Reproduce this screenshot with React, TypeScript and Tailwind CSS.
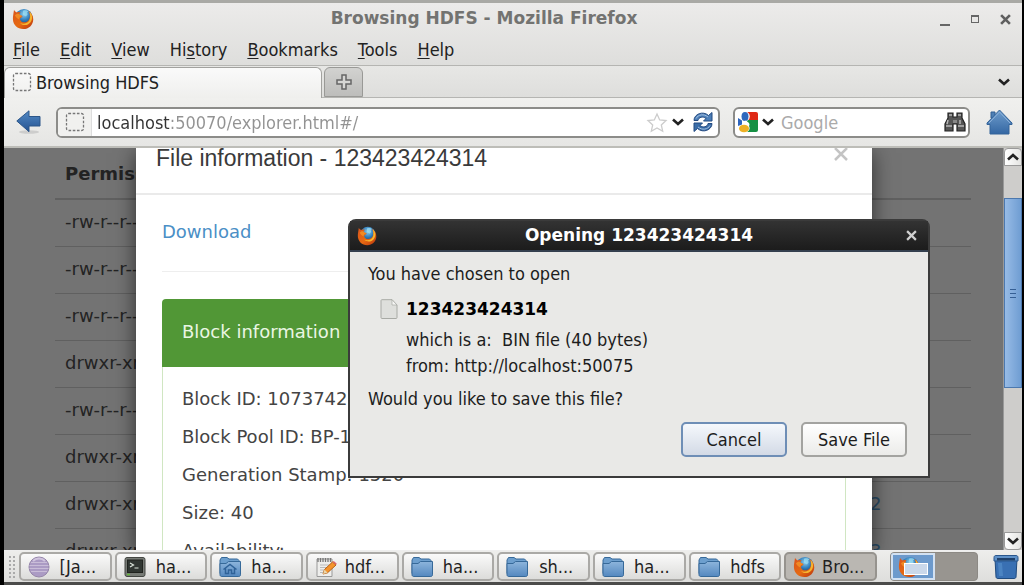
import React from "react";

const MENUS: [string, string, string][] = [
  ["", "F", "ile"],
  ["", "E", "dit"],
  ["", "V", "iew"],
  ["Hi", "s", "tory"],
  ["", "B", "ookmarks"],
  ["", "T", "ools"],
  ["", "H", "elp"],
];

const FILES = [
  { permission: "-rw-r--r--", name: "" },
  { permission: "-rw-r--r--", name: "" },
  { permission: "-rw-r--r--", name: "" },
  { permission: "drwxr-xr-x", name: "" },
  { permission: "-rw-r--r--", name: "" },
  { permission: "drwxr-xr-x", name: "" },
  { permission: "drwxr-xr-x", name: "2" },
  { permission: "drwxr-xr-x", name: "3" },
];

const BLOCK_INFO = ["Block ID: 1073742", "Block Pool ID: BP-1", "Generation Stamp: 1520", "Size: 40", "Availability:"];

function FirefoxIcon({ className }: { className: string }) {
  return (
    <svg className={className} viewBox="0 0 24 24" aria-hidden="true">
      <defs>
        <radialGradient id="ff-globe" cx="0.5" cy="0.3" r="0.7">
          <stop offset="0" stopColor="#8fd0ee" />
          <stop offset="0.5" stopColor="#2f7cba" />
          <stop offset="1" stopColor="#102f63" />
        </radialGradient>
        <linearGradient id="ff-fox" x1="0" y1="0" x2="1" y2="1">
          <stop offset="0" stopColor="#d9541c" />
          <stop offset="0.55" stopColor="#e66a12" />
          <stop offset="1" stopColor="#b8330e" />
        </linearGradient>
      </defs>
      <circle cx="13" cy="10.5" r="9.500" fill="url(#ff-globe)" />
      <path d="M12 3c2-1 5-.6 6 1-1.500.2-2 1-1.200 2 .8 1.200-.8 2-1.600 3.200-1-1.200-2.700-.7-3.200-2.200z" fill="#9adcf2" opacity=".75" />
      <path
        d="M2.200 2c.7 1.700 1.800 2.500 3.200 2.800C7 4 8.300 4.100 9.500 4.800 8.300 5.500 7.800 6.500 8 7.600l3.600 1.100c-.3 1.500-2.200 1.700-3 2.900.2 3.600 4.500 5.200 8 3.100 2.500-1.600 3.400-4.300 2.700-8.200-.4-1.600-1-2.700-1.800-3.500 3.600 2 5.800 5.400 5.700 9.500C23 18.600 18.300 23 12.300 23 6 23 1.200 18.500 1 12.300.9 9 1.600 6.500 2.200 2z"
        fill="url(#ff-fox)"
      />
      <path d="M19 3.800c3.500 3.100 4 8.500 1 12-2.700 3.400-8 3.800-11.200.8 4.300 1.200 8.300.1 10-3 1.400-2.600 1.300-6.500.2-9.800z" fill="#f6b52f" />
      <path d="M3.200 8.200c1-1.500 2.600-2.200 4.400-1.700L11 9c-1.800.3-3.400 1.700-3.100 3.600-2-.8-3.500-2.300-4.700-4.400z" fill="#f08a24" />
    </svg>
  );
}

function PageIcon() {
  return (
    <svg className="size-5 shrink-0" viewBox="0 0 20 20" aria-hidden="true">
      <rect x="1.500" y="1.500" width="17" height="17" rx="2" fill="none" stroke="#777" strokeWidth="1.300" strokeDasharray="2.600 1.600" />
    </svg>
  );
}

function Chevron({ up = false }: { up?: boolean }) {
  return (
    <svg className="h-2 w-3.5 shrink-0" viewBox="0 0 14 8" aria-hidden="true">
      <path d={up ? "M2 6.500 7 2l5 4.500" : "M2 1.500 7 6l5-4.500"} fill="none" stroke="#222" strokeWidth="2.600" />
    </svg>
  );
}

function FolderIcon({ home = false }: { home?: boolean }) {
  return (
    <svg className="size-[22px] shrink-0" viewBox="0 0 22 22" aria-hidden="true">
      <defs>
        <linearGradient id="folder" x1="0" y1="0" x2="0" y2="1">
          <stop offset="0" stopColor="#8db5dc" />
          <stop offset="1" stopColor="#5488bf" />
        </linearGradient>
      </defs>
      <path d="M1 4 2.500 1.500H8l2 1.500h8.500L20 4.500v13H1z" fill="#6d9fce" stroke="#366999" strokeLinejoin="round" />
      <path d="M1 7.500h6l2.500-2H21.500v13.300c0 1-.7 1.700-1.700 1.700H2.700c-1 0-1.700-.7-1.700-1.700z" fill="url(#folder)" stroke="#366999" />
      {home && <path d="m4.500 13.500 6.500-5 6.500 5M6.500 12.500v5h3v-3.500h3v3.500h3v-5" fill="none" stroke="#2f6298" strokeWidth="1.500" />}
    </svg>
  );
}

function JavaAppIcon() {
  return (
    <svg className="size-[22px] shrink-0" viewBox="0 0 22 22" aria-hidden="true">
      <circle cx="11" cy="11" r="10" fill="#ab9bc4" stroke="#9585a9" />
      <path d="M3 6.500h16M1.500 9.500h19M1.500 12.500h19M3 15.500h16" stroke="#c9bdd8" strokeWidth="1" />
      <path d="M5 5a8.500 8.500 0 0 1 12 0" stroke="#d1c5df" strokeWidth="2" fill="none" />
    </svg>
  );
}

function TerminalIcon() {
  return (
    <svg className="size-[22px] shrink-0" viewBox="0 0 22 22" aria-hidden="true">
      <rect x="1" y="1.500" width="20" height="19" rx="2" fill="#777b76" stroke="#444743" />
      <rect x="3.500" y="4" width="15" height="12.500" fill="#303632" stroke="#20231f" />
      <path d="m6 7 3.500 2L6 11M10.500 12h4" fill="none" stroke="#dce5dc" strokeWidth="1.200" />
      <path d="M3 18.500h3" stroke="#65b83a" strokeWidth="1.500" />
    </svg>
  );
}

function EditorIcon() {
  return (
    <svg className="size-[22px] shrink-0" viewBox="0 0 22 22" aria-hidden="true">
      <path d="M2 3h15v17.500H2z" fill="#eeeeec" stroke="#999" />
      <path d="M3 2v4M5.500 2v4M8 2v4M10.500 2v4M13 2v4M15.500 2v4" stroke="#777" strokeWidth="1.300" />
      <path d="M5 9h9M5 11.500h7M5 14h4M5 16.500h3" stroke="#bbb" />
      <path d="m8 18 1.500-4.500L17.500 6 21 9l-8.500 7.800z" fill="#f5942c" stroke="#b66014" />
      <path d="m8 18 1.500-4.500 3 3.300z" fill="#ead6aa" />
      <path d="m17.500 6 1.300-1.100 3 2.900L21 9z" fill="#d66" />
    </svg>
  );
}

function TrashIcon() {
  return (
    <svg className="h-[26px] w-7" viewBox="0 0 28 26" aria-hidden="true">
      <path d="M3 5h22l-1 18c-.2 1-.8 1.500-2 1.500H6c-1.200 0-1.800-.5-2-1.500z" fill="#3970b3" stroke="#204b7e" />
      <path d="M2 3.500c0-1.200.7-2 2-2h20c1.300 0 2 .8 2 2V7H2z" fill="#5f91c8" stroke="#2a568c" />
      <path d="M5 4h18v2.500H5z" fill="#1e406b" />
      <path d="m6 9 1 13h4L10 9z" fill="#5891cc" opacity=".6" />
    </svg>
  );
}

const TASKS = [
  { label: "[Ja...", icon: <JavaAppIcon /> },
  { label: "ha...", icon: <TerminalIcon /> },
  { label: "ha...", icon: <FolderIcon home /> },
  { label: "hdf...", icon: <EditorIcon /> },
  { label: "ha...", icon: <FolderIcon /> },
  { label: "sh...", icon: <FolderIcon /> },
  { label: "ha...", icon: <FolderIcon /> },
  { label: "hdfs", icon: <FolderIcon /> },
  { label: "Bro...", icon: <FirefoxIcon className="size-[22px] shrink-0" />, active: true },
];

function WindowHeader() {
  return (
    <header className="shrink-0 border-t-3 border-[#a9a9a5] bg-linear-to-b from-[#ecebea] to-[#dededc]">
      <div className="flex h-8 items-center pr-1.5 pl-2">
        <FirefoxIcon className="size-[22px] shrink-0" />
        <h1 className="flex-1 text-center text-[17px] font-bold text-[#737371]">Browsing HDFS - Mozilla Firefox</h1>
        <div className="flex w-[82px] items-center justify-between">
          <button aria-label="Minimize" className="flex size-[22px] items-end justify-center pb-1">
            <span className="h-[2px] w-2.5 bg-[#666]" />
          </button>
          <button aria-label="Maximize" className="flex size-[22px] items-center justify-center">
            <span className="size-2 border border-t-2 border-[#666]" />
          </button>
          <button aria-label="Close" className="flex size-[22px] items-center justify-center">
            <svg className="size-[11px]" viewBox="0 0 10 10">
              <path d="m1 1 8 8M9 1 1 9" stroke="#5f5f5f" strokeWidth="2.400" />
            </svg>
          </button>
        </div>
      </div>
      <nav className="flex h-[30px] items-center gap-5 px-[9px] pb-0.5 font-['DejaVu_Sans_Condensed','DejaVu_Sans',sans-serif] text-[18px]">
        {MENUS.map(([before, key, after]) => (
          <button key={key + after}>
            {before}
            <u className="underline-offset-2">{key}</u>
            {after}
          </button>
        ))}
      </nav>
    </header>
  );
}

function TabStrip() {
  return (
    <div className="flex h-[33px] shrink-0 items-end gap-[2px] border-t border-b border-[#b5b5b2] bg-linear-to-b from-[#e7e7e5] to-[#dededc] pt-[2px]">
      <button className="-mb-px flex h-[31px] w-[318px] items-center gap-1 rounded-t-md border border-b-0 border-[#a2a29f] bg-linear-to-b from-[#fafafa] to-[#efefed] px-[7px] pb-0.5 font-['DejaVu_Sans_Condensed','DejaVu_Sans',sans-serif] text-[18px]">
        <PageIcon />
        Browsing HDFS
      </button>
      <button aria-label="New tab" className="flex h-[30px] w-[39px] items-center justify-center rounded-t-md border border-[#999996] bg-linear-to-b from-[#d2d2d0] to-[#bdbdbb]">
        <svg className="size-4" viewBox="0 0 16 16">
          <path d="M6 1h4v5h5v4h-5v5H6v-5H1V6h5z" fill="#d6d6d4" stroke="#666" strokeWidth="1.500" />
        </svg>
      </button>
      <button aria-label="List all tabs" className="ml-auto flex h-[30px] w-9 items-center justify-center">
        <Chevron />
      </button>
    </div>
  );
}

function Toolbar() {
  return (
    <div className="flex h-[50px] shrink-0 items-center border-b-2 border-[#bdbdb8] bg-linear-to-b from-[#f0f0ee] to-[#e6e6e4] pr-[9px] pl-3 font-['DejaVu_Sans_Condensed','DejaVu_Sans',sans-serif] text-[18px]">
      <button aria-label="Back" className="flex w-10 shrink-0 items-center">
        <svg className="h-6 w-[25px]" viewBox="0 0 25 24">
          <defs>
            <linearGradient id="arrow" x1="0" y1="0" x2="0" y2="1">
              <stop offset="0" stopColor="#538ac5" />
              <stop offset="1" stopColor="#245290" />
            </linearGradient>
          </defs>
          <ellipse cx="13" cy="22" rx="10" ry="1.800" fill="#bbb" opacity=".6" />
          <path d="M.8 11 13 .8v5.700h11v9.500H13v5.700z" fill="url(#arrow)" stroke="#2c5689" />
        </svg>
      </button>
      <div className="flex h-[31px] min-w-0 flex-1 items-center overflow-hidden rounded-md border-2 border-[#8c8c89] bg-white pr-1">
        <div className="flex h-full w-[34px] shrink-0 items-center justify-center border-r border-[#ddd] bg-[#f1f1ef]">
          <PageIcon />
        </div>
        {/* host is darker than the rest of the address */}
        <input
          aria-label="Address"
          defaultValue="localhost:50070/explorer.html#/"
          className="min-w-0 flex-1 bg-[linear-gradient(to_right,#333_78px,#929292_78px)] bg-clip-text pl-[5px] text-transparent caret-black outline-none"
        />
        <button aria-label="Bookmark this page">
          <svg className="h-[21px] w-[22px]" viewBox="0 0 22 21">
            <path d="m11 2 2.700 6 6.300.6-4.700 4.300 1.400 6.300L11 16l-5.700 3.200 1.400-6.300L2 8.600 8.300 8z" fill="#fff" stroke="#ccc" strokeWidth="1.300" />
          </svg>
        </button>
        <button aria-label="History" className="flex w-5 justify-center">
          <Chevron />
        </button>
        <button aria-label="Reload" className="ml-1">
          <svg className="size-[22px]" viewBox="0 0 22 22">
            <path d="M2 9.500C2 3 11-.5 16.500 4.500L20 1.500V10h-8.500l2.500-2.500C11 5 6.500 6 6 9.500z" fill="#4d7fb8" stroke="#234a80" />
            <path d="M20 12.500c0 6.500-9 10-14.500 5L2 20.500V12h8.500L8 14.500c3 2.500 7.500 1.500 8-2z" fill="#3b6da8" stroke="#234a80" />
            <path d="M4 7.500C6 3.500 12 2.500 16 6M18 14.500c-2 4-8 5-12 1.500" fill="none" stroke="#a3c1e2" />
          </svg>
        </button>
      </div>
      <div className="ml-[13px] flex h-[31px] w-[237px] shrink-0 items-center rounded-md border-2 border-[#8c8c89] bg-white px-[2px]">
        <button aria-label="Search engine" className="flex w-10 shrink-0 items-center gap-0.5">
          <svg className="size-[22px] shrink-0" viewBox="0 0 22 22">
            <path d="M10 1h9a2 2 0 0 1 2 2v6H10z" fill="#df2916" />
            <path d="M10 9h11v10a2 2 0 0 1-2 2h-9z" fill="#169044" />
            <path d="M1 7 5 9.500v4L1 15z" fill="#2e65bd" />
            <ellipse cx="8" cy="5.500" rx="4.800" ry="5" fill="#fff" />
            <ellipse cx="8" cy="5.500" rx="3.500" ry="4.500" fill="#2e68bd" />
            <path d="M8 9.500c5 2 5 4 4 5.500 2 3-1 6.500-4 6.500H3l2-8z" fill="#fff" />
            <ellipse cx="7" cy="17.500" rx="5" ry="3.800" fill="#edb125" />
          </svg>
          <Chevron />
        </button>
        <input aria-label="Search" placeholder="Google" className="min-w-0 flex-1 pl-1 outline-none placeholder:text-[#aaa]" />
        <button aria-label="Search the web" className="shrink-0">
          <svg className="h-5 w-[22px]" viewBox="0 0 22 20">
            <path d="M4 1h5v4h4V1h5v5l3 6v7h-8v-7H9v7H1v-7l3-6z" fill="#555" stroke="#222" strokeWidth="1.200" />
            <path d="M2 14h6M14 14h6M5 3h3M14 3h3M4 8l-1 4M16 8v4" stroke="#b7b7b7" strokeWidth="1.500" />
            <path d="M9 8h4v3H9z" fill="#888" />
          </svg>
        </button>
      </div>
      <button aria-label="Home" className="ml-4 shrink-0">
        <svg className="h-[26px] w-[27px]" viewBox="0 0 27 26">
          <path d="M5 9V3h4v5z" fill="#4f80b5" stroke="#315f94" />
          <path d="M13.500 1 26 14v1.500h-3V25H4v-9.500H1V14z" fill="url(#home)" stroke="#34649a" strokeLinejoin="round" />
          <path d="m3 14 10.500-11L24 14" fill="none" stroke="#8fb4dc" />
          <defs>
            <linearGradient id="home" x1="0" y1="0" x2="0" y2="1">
              <stop offset="0" stopColor="#6f9dcc" />
              <stop offset="1" stopColor="#3467a3" />
            </linearGradient>
          </defs>
        </svg>
      </button>
    </div>
  );
}

function FileTable() {
  return (
    <div className="h-full overflow-hidden bg-[#737373] pr-8 pl-[51px]">
      <table className="w-full table-fixed text-left text-[18px] text-[#232323]">
        <thead>
          <tr className="h-[51px] border-b-2 border-[#606060]">
            <th className="w-[808px] pl-2.5">Permission</th>
            <th />
          </tr>
        </thead>
        <tbody>
          {FILES.map((file, i) => (
            <tr key={i} className="h-[47px] border-b border-[#606060]">
              <td className="pb-0.5 pl-2.5">{file.permission}</td>
              <td className="pb-0.5 pl-[7px]">
                {file.name && (
                  <a href="#" className="text-[#2a4b66]">
                    {file.name}
                  </a>
                )}
              </td>
            </tr>
          ))}
        </tbody>
      </table>
    </div>
  );
}

function FileInfoModal() {
  return (
    <section className="absolute inset-y-0 right-[131px] left-[132px] overflow-hidden bg-white text-[18px] text-[#444] shadow-[0_5px_20px_rgba(0,0,0,0.6)]">
      <div className="flex h-[47px] items-start justify-between border-b-2 border-[#eaeaea] px-5">
        <h2 className="font-['Liberation_Sans',sans-serif] text-[23px] leading-5 text-[#3a3a3a]">File information - 123423424314</h2>
        <button aria-label="Close file information" className="p-1 pt-0">
          <svg className="size-3.5" viewBox="0 0 14 14">
            <path d="m1 0 12 12M13 0 1 12" stroke="#c4c4c4" strokeWidth="2.500" />
          </svg>
        </button>
      </div>
      <div className="px-[26px]">
        <div className="flex h-[77px] items-center border-b border-[#eee] pb-1">
          <a href="#" className="text-[#4b8fc6]">
            Download
          </a>
        </div>
        <div className="mt-[27px]">
          <h3 className="flex h-[68px] items-center rounded-t bg-[#519736] px-5 pb-1 text-[#eaf6e3]">Block information</h3>
          <div className="border-x border-[#d0e6c2] px-[19px] pt-[13px] leading-[38px] whitespace-nowrap">
            {BLOCK_INFO.map((line) => (
              <p key={line}>{line}</p>
            ))}
          </div>
        </div>
      </div>
    </section>
  );
}

function ScrollBar() {
  return (
    <div className="flex w-[19px] shrink-0 flex-col border-l border-[#999] bg-[#cecdcb]">
      <button aria-label="Scroll up" className="flex h-[18px] items-center justify-center rounded-t border border-[#999] bg-linear-to-r from-white to-[#e4e4e2]">
        <Chevron up />
      </button>
      <div className="min-h-0 flex-1 pt-8">
        <div className="flex h-[57%] flex-col items-center justify-center gap-[3px] border border-[#4c78ae] bg-linear-to-r from-[#97bbe6] to-[#6f9dd2]">
          <span className="h-px w-1.5 bg-[#355f94]" />
          <span className="h-px w-1.5 bg-[#355f94]" />
          <span className="h-px w-1.5 bg-[#355f94]" />
        </div>
      </div>
      <button aria-label="Scroll down" className="flex h-[18px] items-center justify-center rounded-b border border-[#999] bg-linear-to-r from-white to-[#e4e4e2]">
        <Chevron />
      </button>
    </div>
  );
}

function OpeningDialog() {
  return (
    <div
      role="dialog"
      aria-label="Opening 123423424314"
      className="absolute top-[71px] right-[92px] flex w-[582px] flex-col rounded-t-lg border-2 border-[#3b3b3b] bg-[#e9e9e7] font-['DejaVu_Sans_Condensed','DejaVu_Sans',sans-serif] text-[18px] text-[#1d1d1d]"
    >
      <div className="flex h-[31px] items-center border-b-2 border-[#34404f] bg-linear-to-b from-[#333] to-[#1c1c1c] px-[7px]">
        <FirefoxIcon className="size-5 shrink-0" />
        <h2 className="flex-1 text-center font-['DejaVu_Sans',sans-serif] text-[17px] font-bold text-white">Opening 123423424314</h2>
        <button aria-label="Close dialog" className="flex size-5 items-center justify-center">
          <svg className="size-[11px]" viewBox="0 0 10 10">
            <path d="m1 1 8 8M9 1 1 9" stroke="#d0d0d0" strokeWidth="2" />
          </svg>
        </button>
      </div>
      <div className="px-[18px] pt-[9px] pb-[19px]">
        <p className="leading-[26px]">You have chosen to open</p>
        <div className="mt-[9px] flex gap-2 pl-3">
          <svg className="mt-[3px] h-5 w-[18px] shrink-0" viewBox="0 0 18 20" aria-hidden="true">
            <path d="M2 .7h10L17 6v12.500a1 1 0 0 1-1 1H2a1 1 0 0 1-1-1v-17a1 1 0 0 1 1-.8z" fill="#dedfdc" stroke="#a8aaa5" />
            <path d="M12 .7V6h5z" fill="#f6f6f5" stroke="#a8aaa5" strokeWidth=".7" />
          </svg>
          <div className="leading-[26px]">
            <p className="mb-[5px] font-['DejaVu_Sans',sans-serif] text-[17px] font-bold text-black">123423424314</p>
            <p>which is a: &nbsp;BIN file (40 bytes)</p>
            <p>from: http://localhost:50075</p>
          </div>
        </div>
        <p className="mt-[7px] leading-[26px]">Would you like to save this file?</p>
        <div className="mt-2.5 flex justify-end gap-[14px] pr-[3px]">
          <button className="h-[35px] w-[106px] rounded-[5px] border-2 border-[#6e8eb6] bg-linear-to-b from-[#f5f8fc] to-[#d3dae6]">Cancel</button>
          <button className="h-[35px] w-[106px] rounded-[5px] border-2 border-[#a3a3a0] bg-linear-to-b from-white to-[#ebebe9]">Save File</button>
        </div>
      </div>
    </div>
  );
}

function TaskBar() {
  return (
    <footer className="flex h-[35px] shrink-0 border-t border-b-3 border-t-[#eee] border-b-[#4b4b4a] bg-linear-to-b from-[#ededeb] to-[#dededc] pr-0.5 pl-1">
      <span className="my-1 mr-1 w-[7px] bg-[radial-gradient(#aaa_1px,transparent_1px)] bg-size-[4px_4px]" />
      <div className="flex min-w-0 flex-1 gap-[3px] font-['DejaVu_Sans_Condensed','DejaVu_Sans',sans-serif] text-[18px]">
        {TASKS.map(({ label, icon, active }, i) => (
          <button
            key={i}
            className={`my-px flex min-w-0 flex-1 items-center rounded-[5px] border-2 pr-1 pl-[7px] ${
              active ? "border-[#96938e] bg-[#bab7b2]" : "border-[#aaa9a6] bg-linear-to-b from-[#fafafa] to-[#dcdcda]"
            }`}
          >
            {icon}
            <span className="flex-1 text-center whitespace-nowrap">{label}</span>
          </button>
        ))}
      </div>
      <div className="my-px ml-[13px] flex w-[88px] shrink-0 overflow-hidden rounded border border-[#8c8984] bg-[#989590]">
        <button aria-label="Workspace 1" className="flex w-11 items-center justify-center border-2 border-[#d3e1f1] bg-[#6d9acc]">
          <FirefoxIcon className="size-[22px] shrink-0" />
          <span className="mt-1 -ml-4 h-3 w-6 shrink-0 border border-white bg-[#cad8ea]" />
        </button>
        <button aria-label="Workspace 2" className="flex-1" />
      </div>
      <button aria-label="Trash" className="ml-[14px] shrink-0">
        <TrashIcon />
      </button>
    </footer>
  );
}

export default function App() {
  return (
    <div className="h-screen overflow-hidden bg-black pr-[2px] pl-1 font-['DejaVu_Sans',sans-serif] text-[#222]">
      <div className="flex h-full flex-col">
        <WindowHeader />
        <TabStrip />
        <Toolbar />
        <main className="relative flex min-h-0 flex-1">
          <div className="relative min-w-0 flex-1 overflow-hidden">
            <FileTable />
            <FileInfoModal />
          </div>
          <ScrollBar />
          <OpeningDialog />
        </main>
        <TaskBar />
      </div>
    </div>
  );
}
